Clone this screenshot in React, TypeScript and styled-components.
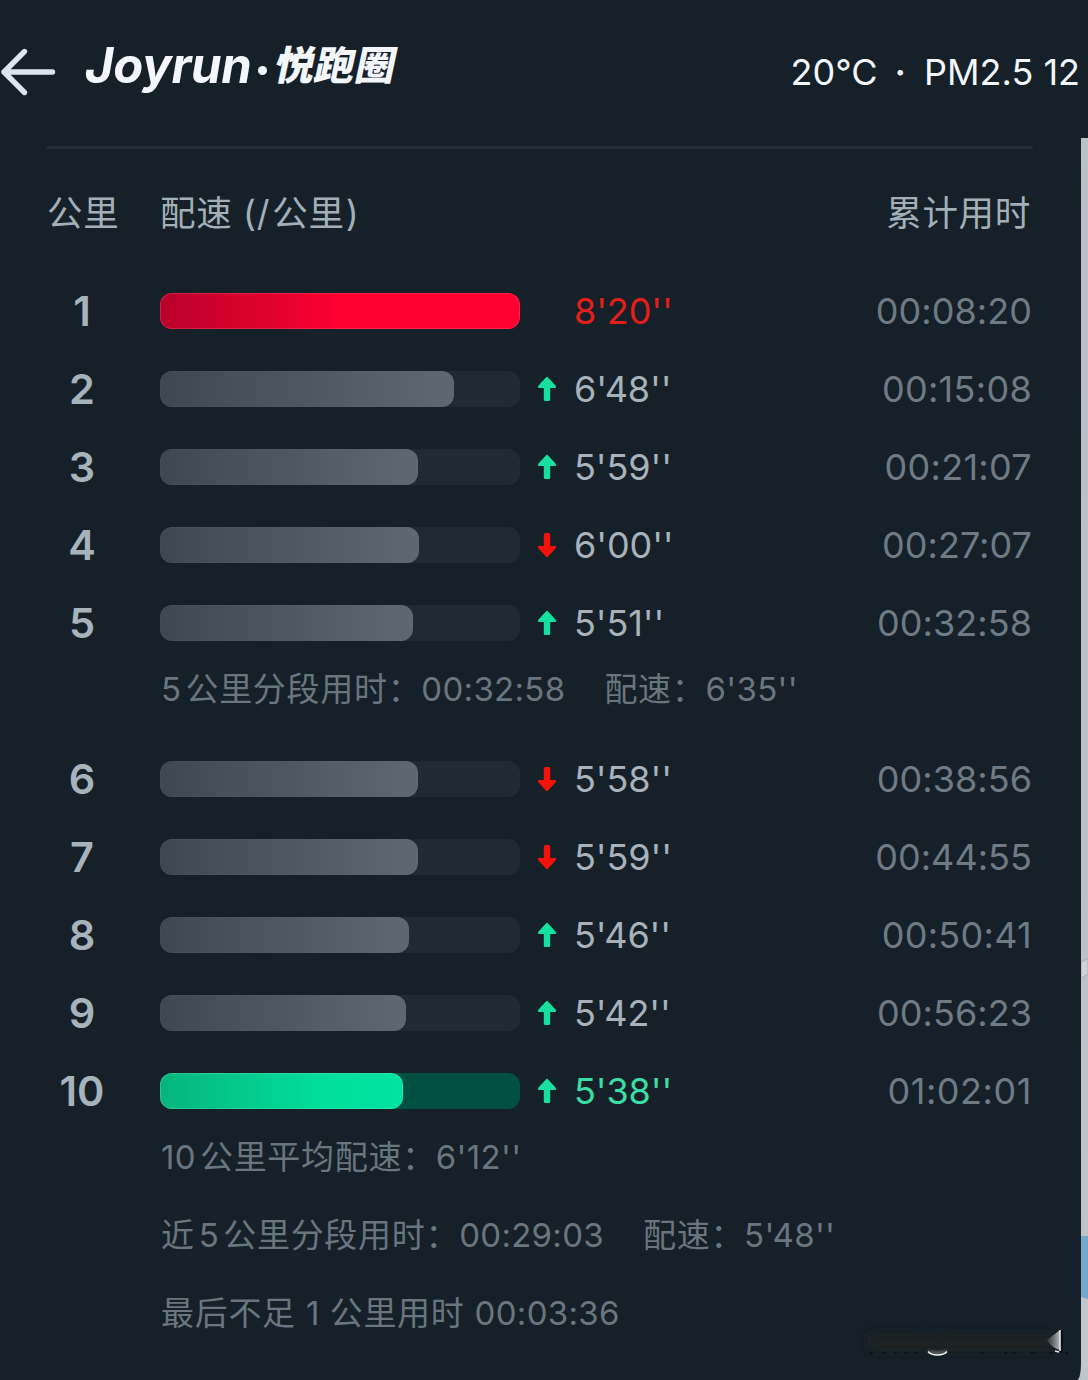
import React from "react";
import styled, { createGlobalStyle } from "styled-components";

const GlobalStyle = createGlobalStyle`
  * { box-sizing: border-box; }
  body {
    margin: 0;
    background: #152027;
    font-family: Inter, "Noto Sans CJK SC", sans-serif;
  }
`;

const Page = styled.div`
  width: 1088px;
  height: 1380px;
  overflow: hidden;
  display: flex;
  flex-direction: column;
  background: #152028;
`;

const Header = styled.header`
  height: 138px;
  flex: none;
  display: flex;
  justify-content: space-between;
  align-items: flex-start;
`;

const Brand = styled.div`
  display: flex;
  align-items: flex-start;
`;

const BackIcon = styled.svg`
  display: block;
  margin-top: 46px;
  width: 58px;
  height: 52px;
`;

const Logo = styled.div`
  display: flex;
  align-items: center;
  height: 60px;
  margin: 36px 0 0 27px;
  color: #f3f6fa;
  white-space: nowrap;
`;

const LogoLatin = styled.span`
  font-size: 49px;
  font-weight: 750;
  font-style: italic;
  line-height: 60px;
  letter-spacing: -0.3px;
`;

const LogoDot = styled.span`
  width: 9px;
  height: 9px;
  border-radius: 50%;
  background: #f3f6fa;
  margin: 8px 9px 0 6px;
`;

const LogoHan = styled.span`
  font-family: "Noto Sans CJK SC", sans-serif;
  font-size: 40px;
  font-weight: 900;
  line-height: 60px;
  letter-spacing: 0.4px;
  margin-bottom: 6px;
  transform: skewX(-12deg);
`;

const Weather = styled.div`
  display: flex;
  margin: 50px 8px 0 0;
  font-size: 36px;
  line-height: 44px;
  color: #f2f7fb;
  white-space: pre;
`;

const WeatherDot = styled.span`
  margin: 0 18px 0 17px;
  font-weight: 600;
`;

const Body = styled.div`
  flex: 1;
  display: flex;
  background: #b9c1c6;
`;

const Panel = styled.main`
  width: 1081px;
  height: 1242px;
  padding: 8px 48px 0 46px;
  background: #152028;
  border-bottom-right-radius: 4px 16px;
  display: flex;
  flex-direction: column;
`;

const MapEdge = styled.svg`
  display: block;
  width: 7px;
  height: 1242px;
`;

const Divider = styled.div`
  height: 3px;
  flex: none;
  background: #232e36;
  border-radius: 2px;
`;

const columns = "72px 42px 360px 54px 1fr auto";

const Heading = styled.div`
  display: grid;
  grid-template-columns: 70px 43px 1fr auto;
  height: 123px;
  flex: none;
  padding: 39px 2px 0 1px;
  font-size: 35.500px;
  line-height: 52px;
  letter-spacing: 0.7px;
  color: #a3afb7;
  white-space: nowrap;
`;

const Unit = styled.span`
  margin: 0 1px 0 2px;
`;

const Row = styled.div`
  display: grid;
  grid-template-columns: ${columns};
  align-items: center;
  height: 78px;
  flex: none;
`;

const Index = styled.span`
  text-align: center;
  font-size: 41.500px;
  line-height: 50px;
  font-weight: 600;
  color: #a7b3bb;
`;

type Tone = "slow" | "normal" | "fast";

const trackColor: Record<Tone, string> = { slow: "#5c0a22", normal: "#1f2b32", fast: "#005043" };
const fillColor: Record<Tone, string> = {
  slow: "linear-gradient(90deg, #b8022b 0%, #ff002f 52%, #ff0030 100%)",
  normal: "linear-gradient(90deg, #3d4851 0%, #5f6870 100%)",
  fast: "linear-gradient(90deg, #06b47c 0%, #02de9a 65%, #02e2a0 100%)",
};
const edgeColor: Record<Tone, string> = {
  slow: "rgba(255,90,120,.35)",
  normal: "rgba(110,122,130,.1)",
  fast: "rgba(110,240,190,.3)",
};
const paceColor: Record<Tone, string> = { slow: "#e61e1a", normal: "#a7b2ba", fast: "#3ddda6" };

const Track = styled.div<{ $tone: Tone }>`
  grid-column: 3;
  height: 36px;
  border-radius: 12px;
  background: ${(p) => trackColor[p.$tone]};
`;

const Fill = styled.div<{ $tone: Tone }>`
  height: 36px;
  border-radius: 12px;
  background: ${(p) => fillColor[p.$tone]};
  box-shadow: inset 0 0 0 1px ${(p) => edgeColor[p.$tone]};
`;

const TrendIcon = styled.svg<{ $down: boolean }>`
  display: block;
  justify-self: center;
  width: 20px;
  height: 26px;
  transform: ${(p) => (p.$down ? "rotate(180deg)" : "none")};
  fill: ${(p) => (p.$down ? "#f51208" : "#16e09d")};
`;

const Pace = styled.span<{ $tone: Tone }>`
  grid-column: 5;
  font-size: 36px;
  line-height: 44px;
  letter-spacing: -0.1px;
  color: ${(p) => paceColor[p.$tone]};
`;

const Elapsed = styled.span<{ $ones: number }>`
  font-size: 36px;
  line-height: 44px;
  margin-right: 1px;
  letter-spacing: ${(p) => 0.05 + p.$ones * 0.25}px;
  color: #6f7b84;
`;

const Note = styled.div<{ $tight?: boolean }>`
  height: 78px;
  flex: none;
  display: flex;
  padding: 2px 0 0 115px;
  font-size: 33px;
  line-height: 50px;
  word-spacing: ${(p) => (p.$tight ? "-5.5px" : "0.5px")};
  color: #6a767e;
  white-space: pre;
`;

const NoteLabel = styled.span`
  margin-right: 39px;
`;

const Han = styled.span`
  letter-spacing: 0.7px;
`;

const Digits = styled.span`
  letter-spacing: 0.3px;
`;

const Watermark = styled.svg`
  position: absolute;
  left: 858px;
  top: 1322px;
  width: 210px;
  height: 38px;
`;

type Split = { km: number; width: number; trend?: "up" | "down"; pace: string; total: string; tone?: Tone };

const firstFive: Split[] = [
  { km: 1, width: 360, pace: "8'20''", total: "00:08:20", tone: "slow" },
  { km: 2, width: 294, trend: "up", pace: "6'48''", total: "00:15:08" },
  { km: 3, width: 258, trend: "up", pace: "5'59''", total: "00:21:07" },
  { km: 4, width: 259, trend: "down", pace: "6'00''", total: "00:27:07" },
  { km: 5, width: 253, trend: "up", pace: "5'51''", total: "00:32:58" },
];

const lastFive: Split[] = [
  { km: 6, width: 258, trend: "down", pace: "5'58''", total: "00:38:56" },
  { km: 7, width: 258, trend: "down", pace: "5'59''", total: "00:44:55" },
  { km: 8, width: 249, trend: "up", pace: "5'46''", total: "00:50:41" },
  { km: 9, width: 246, trend: "up", pace: "5'42''", total: "00:56:23" },
  { km: 10, width: 243, trend: "up", pace: "5'38''", total: "01:02:01", tone: "fast" },
];

function SplitRow({ split }: { split: Split }) {
  const tone = split.tone ?? "normal";
  return (
    <Row>
      <Index>{split.km}</Index>
      <Track $tone={tone}>
        <Fill $tone={tone} style={{ width: split.width }} />
      </Track>
      {split.trend && (
        <TrendIcon $down={split.trend === "down"} viewBox="0 0 20 26">
          <path d="M8.900 1.400Q10 .3 11.100 1.400L18.900 10Q19.800 11.800 18 12H13.200V23.500Q13.200 25 11.700 25H8.300Q6.800 25 6.800 23.500V12H2Q.2 11.800 1.100 10Z" />
        </TrendIcon>
      )}
      <Pace $tone={tone}>{split.pace}</Pace>
      <Elapsed $ones={split.total.split("1").length - 1}>{split.total}</Elapsed>
    </Row>
  );
}

export default function App() {
  return (
    <Page>
      <GlobalStyle />
      <Header>
        <Brand>
          <BackIcon viewBox="0 0 58 52" fill="none" stroke="#dde4f0" strokeWidth="5.400" strokeLinecap="round" strokeLinejoin="round">
            <path d="M52.500 26H4M24.500 5.500L4 26L24.500 46.500" />
          </BackIcon>
          <Logo>
            <LogoLatin>Joyrun</LogoLatin>
            <LogoDot />
            <LogoHan>悦跑圈</LogoHan>
          </Logo>
        </Brand>
        <Weather>
          <span>20°C</span>
          <WeatherDot>·</WeatherDot>
          <span>PM2.5 12</span>
        </Weather>
      </Header>
      <Body>
        <Panel>
          <Divider />
          <Heading>
            <span>公里</span>
            <i />
            <span>
              配速 (/<Unit>公里</Unit>)
            </span>
            <span>累计用时</span>
          </Heading>
          {firstFive.map((s) => (
            <SplitRow key={s.km} split={s} />
          ))}
          <Note $tight>
            <NoteLabel>
              <Digits>5 </Digits>
              <Han>公里分段用时：</Han>
              <Digits>00:32:58</Digits>
            </NoteLabel>
            <NoteLabel>
              <Han>配速：</Han>
              <Digits>6'35''</Digits>
            </NoteLabel>
          </Note>
          {lastFive.map((s) => (
            <SplitRow key={s.km} split={s} />
          ))}
          <Note $tight>
            <NoteLabel>
              <Digits>10 </Digits>
              <Han>公里平均配速：</Han>
              <Digits>6'12''</Digits>
            </NoteLabel>
          </Note>
          <Note $tight>
            <NoteLabel>
              <Han>近</Han>
              <Digits> 5 </Digits>
              <Han>公里分段用时：</Han>
              <Digits>00:29:03</Digits>
            </NoteLabel>
            <NoteLabel>
              <Han>配速：</Han>
              <Digits>5'48''</Digits>
            </NoteLabel>
          </Note>
          <Note>
            <NoteLabel>
              <Han>最后不足</Han>
              <Digits> 1 </Digits>
              <Han>公里用时</Han>
              <Digits> 00:03:36</Digits>
            </NoteLabel>
          </Note>
        </Panel>
        <MapEdge viewBox="0 0 7 1242">
          <defs>
            <linearGradient id="land" x1="0" y1="0" x2="0" y2="1">
              <stop offset="0" stopColor="#b7c3c3" />
              <stop offset=".06" stopColor="#bcbdc8" />
              <stop offset=".6" stopColor="#bcbfc8" />
              <stop offset="1" stopColor="#c0c7ca" />
            </linearGradient>
          </defs>
          <rect width="7" height="1242" fill="url(#land)" />
          <path d="M0 824L7 821V836L0 840Z" fill="#d2d3d6" stroke="#a9adb5" />
          <path d="M0 1098H7V1161L0 1159Z" fill="#73a7cd" />
        </MapEdge>
      </Body>
      <Watermark viewBox="0 0 210 38">
        <defs>
          <filter id="soft" x="-10%" y="-50%" width="120%" height="200%">
            <feGaussianBlur stdDeviation="4" />
          </filter>
          <linearGradient id="shine" x1="0" x2="1">
            <stop offset="0" stopColor="#8b9093" stopOpacity=".2" />
            <stop offset="1" stopColor="#b8bbbd" />
          </linearGradient>
          <linearGradient id="curve" x1="0" y1="0" x2="0" y2="1">
            <stop offset="0" stopColor="#aaa" stopOpacity="0" />
            <stop offset="1" stopColor="#777" stopOpacity=".7" />
          </linearGradient>
        </defs>
        <path d="M10 11H60L70 14L80 10L100 12H195V29H10Z" fill="#1c2023" filter="url(#soft)" />
        <path d="M11 31h4m10 0h3m8 0h3m7 0h3m7 0h4m63 0h3m20 0h3m6 0h3m14 0h5m14 0h4m12 0h5" stroke="#0a0f12" strokeWidth="1.600" />
        <path d="M69 26Q79 31 90 26Q88 33 79 33Q71 33 69 26Z" fill="url(#curve)" />
        <path d="M70 29.500Q73 33 79.500 33Q86 33 89 29.500" fill="none" stroke="#f4f4f4" strokeWidth="1.600" />
        <path d="M189 18L202 8V28Q194 26 189 18Z" fill="url(#shine)" />
        <path d="M202 8V29M197 29L201 30" stroke="#e8e8e8" strokeWidth="1.500" />
        <path d="M204 8V31" stroke="#07090b" strokeWidth="1.500" />
      </Watermark>
    </Page>
  );
}
